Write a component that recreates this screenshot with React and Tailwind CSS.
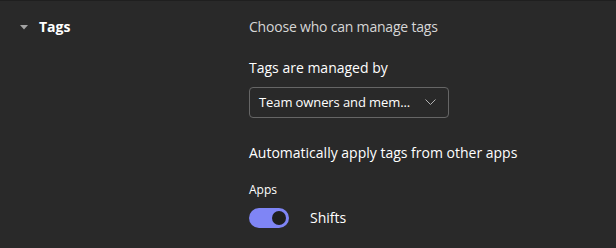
import { useState } from "react";

const Toggle = ({ on, onChange }) => (
  <button
    type="button"
    onClick={() => onChange(!on)}
    className={`w-10 h-5 rounded-full flex items-center px-[3px] ${
      on ? "bg-[#7f85f5] justify-end" : "bg-transparent border border-[#adadad] justify-start"
    }`}
  >
    <span className={`w-[14px] h-[14px] rounded-full ${on ? "bg-[#1f1f1f]" : "bg-[#adadad]"}`} />
  </button>
);

const App = () => {
  const [shifts, setShifts] = useState(true);

  return (
    <div className="w-[616px] h-[248px] bg-[#292929] border-t border-[#1f1f1f] text-white font-['Open_Sans',sans-serif] flex">
      {/* section title */}
      <div className="w-[249px] shrink-0 flex items-start pt-4 pl-5">
        <div className="flex items-center h-5">
          <svg width="8" height="5" viewBox="0 0 8 5" className="mr-[11px]">
            <path d="M0 0h8L4 4.5z" fill="#a3a3a3" />
          </svg>
          <span className="text-sm font-bold">Tags</span>
        </div>
      </div>

      {/* settings */}
      <div className="flex flex-col pt-4">
        <div className="text-sm leading-5 text-[#d6d6d6] tracking-[-0.2px]">Choose who can manage tags</div>

        <div className="mt-[21px] text-sm leading-5">Tags are managed by</div>
        <button
          type="button"
          className="mt-[9px] w-[200px] h-[31px] border border-[#666666] rounded flex items-center justify-between pl-[9px] pr-3"
        >
          <span className="text-[13px] tracking-[-0.1px]">Team owners and mem...</span>
          <svg width="11" height="7" viewBox="0 0 11 7">
            <path d="M0.5 0.5L5.5 5.5l5-5" fill="none" stroke="#b3b3b3" strokeWidth="1" />
          </svg>
        </button>

        <div className="mt-[25px] text-sm leading-5">Automatically apply tags from other apps</div>

        <div className="mt-[19px] text-xs leading-4">Apps</div>
        <div className="mt-[10px] flex items-center">
          <Toggle on={shifts} onChange={setShifts} />
          <span className="ml-[21px] text-sm">Shifts</span>
        </div>
      </div>
    </div>
  );
};

export default App;
